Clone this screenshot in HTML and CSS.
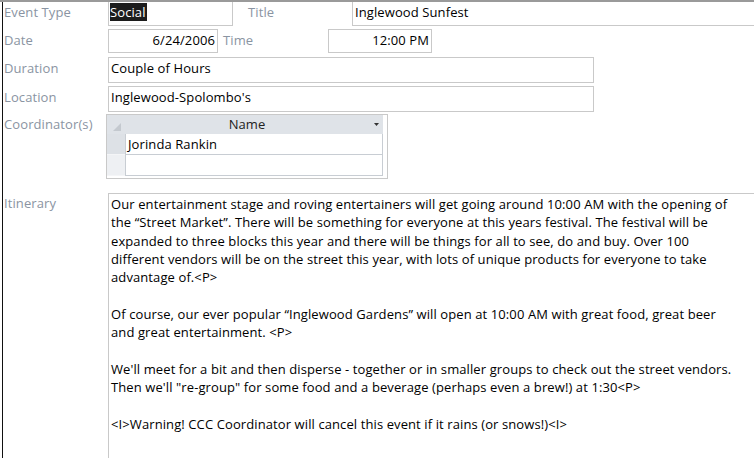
FILE: index.html
```html
<!DOCTYPE html>
<html>
<head>
    <title>Event Details</title>
    <link rel="stylesheet" href="styles.css">
</head>
<body>
    <div class="screen">
        <div class="form">
            <!-- Event type / title -->
            <div class="row row-top">
                <div class="lbl">Event Type</div>
                <div class="field f-type"><span class="sel">Social</span></div>
                <div class="lbl lbl-title">Title</div>
                <div class="field f-title">Inglewood Sunfest</div>
            </div>

            <!-- Date / time -->
            <div class="row row-date">
                <div class="lbl">Date</div>
                <div class="field f-date">6/24/2006</div>
                <div class="lbl lbl-time">Time</div>
                <div class="field f-time">12:00 PM</div>
            </div>

            <div class="row row-duration">
                <div class="lbl">Duration</div>
                <div class="field f-wide">Couple of Hours</div>
            </div>

            <div class="row row-location">
                <div class="lbl">Location</div>
                <div class="field f-wide">Inglewood-Spolombo's</div>
            </div>

            <!-- Coordinators subform -->
            <div class="row row-coord">
                <div class="lbl lbl-coord">Coordinator(s)</div>
                <div class="subform">
                    <div class="grid-head">
                        <div class="corner">
                            <svg width="8" height="8" viewBox="0 0 8 8"><path d="M8 0 L8 8 L0 8 Z" fill="#c4c9cf"/></svg>
                        </div>
                        <div class="head-cell">
                            <span class="head-name">Name</span>
                            <span class="head-arrow">
                                <svg width="5" height="3" viewBox="0 0 5 3"><path d="M0 0 L5 0 L2.5 3 Z" fill="#333"/></svg>
                            </span>
                        </div>
                    </div>
                    <div class="grid-row">
                        <div class="sel-cell"></div>
                        <div class="data-cell">Jorinda Rankin</div>
                    </div>
                    <div class="grid-row new-row">
                        <div class="sel-cell"></div>
                        <div class="data-cell"></div>
                    </div>
                </div>
            </div>

            <!-- Itinerary memo -->
            <div class="row row-itin">
                <div class="lbl">Itinerary</div>
                <div class="field memo">Our entertainment stage and roving entertainers will get going around 10:00 AM with the opening of<br>the “Street Market”. There will be something for everyone at this years festival. The festival will be<br>expanded to three blocks this year and there will be things for all to see, do and buy. Over 100<br>different vendors will be on the street this year, with lots of unique products for everyone to take<br>advantage of.&lt;P&gt;<br><br>Of course, our ever popular “Inglewood Gardens” will open at 10:00 AM with great food, great beer<br>and great entertainment. &lt;P&gt;<br><br>We'll meet for a bit and then disperse - together or in smaller groups to check out the street vendors.<br>Then we'll "re-group" for some food and a beverage (perhaps even a brew!) at 1:30&lt;P&gt;<br><br>&lt;I&gt;Warning! CCC Coordinator will cancel this event if it rains (or snows!)&lt;I&gt;</div>
            </div>
        </div>
    </div>
</body>
</html>
```

FILE: styles.css
```css
body {
    margin: 0;
    font-family: "Open Sans", "Noto Sans", sans-serif;
    font-size: 13px;
    letter-spacing: 0.1px;
    background-color: #fff;
    overflow: hidden;
}

.screen {
    border-top: 2px solid #9a9a9a;
    height: 456px;
    overflow: hidden;
}

.form {
    margin-left: 2px;
    border-left: 1px solid #111;
    padding-left: 1px;
    height: 456px;
}

.row {
    display: flex;
    align-items: flex-start;
}

.lbl {
    flex: none;
    width: 104px;
    padding-top: 3px;
    line-height: 16px;
    color: #8a94a2;
    white-space: nowrap;
}

.field {
    box-sizing: border-box;
    border: 1px solid #c9c9c9;
    padding: 2px 2px;
    line-height: 16px;
    color: #000;
    white-space: nowrap;
    overflow: hidden;
}

/* first row sits under the window edge */
.row-top {
    height: 24px;
}

.row-top .lbl {
    padding-top: 2px;
}

.row-top .field {
    border-top: none;
    height: 24px;
}

.f-type {
    width: 125px;
    padding-left: 1px;
}

.sel {
    background-color: #1c1c1c;
    color: #fff;
    padding-right: 1px;
}

.lbl-title {
    margin-left: 15px;
}

.f-title {
    flex: 1;
    border-right: none;
}

.row-date {
    margin-top: 3px;
}

.f-date {
    width: 110px;
    height: 24px;
    text-align: right;
}

.lbl-time {
    margin-left: 5px;
    width: 105px;
}

.f-time {
    width: 104px;
    height: 24px;
    text-align: right;
}

.row-duration {
    margin-top: 4px;
}

.row-location {
    margin-top: 3px;
}

.f-wide {
    width: 486px;
    height: 26px;
}

.row-coord {
    margin-top: 2px;
}

.lbl-coord {
    width: 102px;
    padding-top: 2px;
}

/* datasheet subform */
.subform {
    box-sizing: border-box;
    width: 282px;
    height: 65px;
    border: 1px solid #c9c9c9;
    padding-right: 4px;
    background-color: #fff;
}

.grid-head {
    display: flex;
    height: 19px;
    background-color: #dfe3e8;
    color: #222;
    line-height: 19px;
}

.corner {
    width: 18px;
    display: flex;
    align-items: flex-end;
    justify-content: flex-end;
    padding: 0 4px 3px 0;
    box-sizing: border-box;
}

.head-cell {
    flex: 1;
    display: flex;
    align-items: center;
}

.head-name {
    flex: 1;
    text-align: center;
}

.head-arrow {
    width: 14px;
    display: flex;
    align-items: center;
    justify-content: center;
}

.head-arrow svg {
    display: block;
}

.grid-row {
    display: flex;
    height: 21px;
}

.sel-cell {
    width: 18px;
    background-color: #dde1e6;
    border-bottom: 1px solid #f4f5f7;
    box-sizing: border-box;
}

.new-row .sel-cell {
    background-color: #eef0f3;
}

.data-cell {
    flex: 1;
    box-sizing: border-box;
    border-left: 1px solid #c8cdd3;
    border-right: 1px solid #c8cdd3;
    border-bottom: 1px solid #c8cdd3;
    padding-left: 2px;
    line-height: 21px;
    color: #000;
}

.row-itin {
    margin-top: 14px;
}

.row-itin .lbl {
    padding-top: 2px;
}

.memo {
    flex: 1;
    height: 280px;
    border-right: none;
    border-bottom: none;
    padding: 1px 2px;
    line-height: 18.3px;
}
```
